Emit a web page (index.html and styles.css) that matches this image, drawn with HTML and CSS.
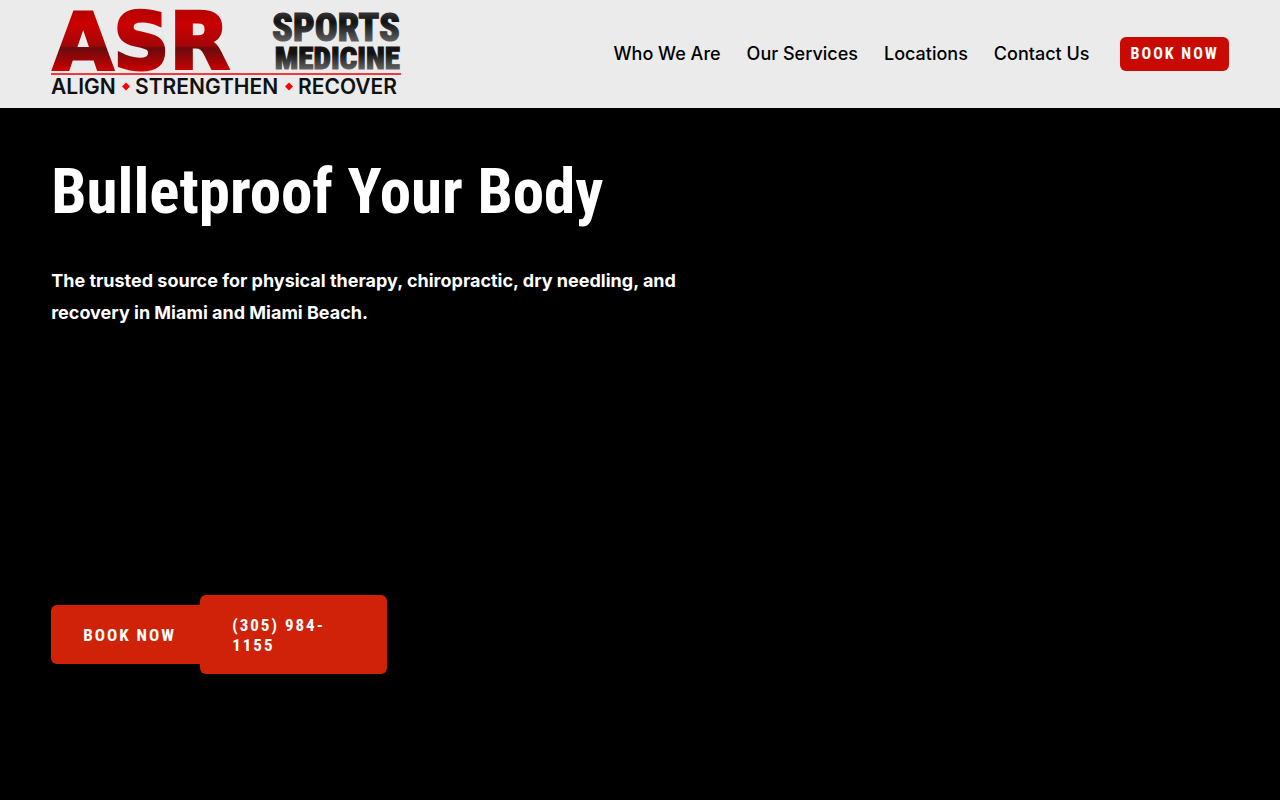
FILE: index.html
```html
<!DOCTYPE html>
<html lang="en">
<head>
<meta charset="utf-8">
<meta name="viewport" content="width=device-width, initial-scale=1">
<title>ASR Sports Medicine</title>
<link rel="stylesheet" href="styles.css">
</head>
<body>
<header class="header">
  <a class="brand" href="#" aria-label="ASR Sports Medicine">
    <svg class="logo" viewBox="0 0 350 84" width="350" height="84">
      <defs>
        <linearGradient id="red" x1="0" y1="0" x2="0" y2="58" gradientUnits="userSpaceOnUse">
          <stop offset="0" stop-color="#b80000"/>
          <stop offset=".2" stop-color="#cb0000"/>
          <stop offset=".58" stop-color="#a60508"/>
          <stop offset=".62" stop-color="#690b0e"/>
          <stop offset="1" stop-color="#c80000"/>
        </linearGradient>
        <linearGradient id="steel-top" x1="0" y1="1" x2="0" y2="31" gradientUnits="userSpaceOnUse">
          <stop offset="0" stop-color="#333"/>
          <stop offset=".3" stop-color="#111"/>
          <stop offset="1" stop-color="#666"/>
        </linearGradient>
        <linearGradient id="steel-bottom" x1="0" y1="34" x2="0" y2="58" gradientUnits="userSpaceOnUse">
          <stop offset="0" stop-color="#151515"/>
          <stop offset=".3" stop-color="#111"/>
          <stop offset="1" stop-color="#666"/>
        </linearGradient>
      </defs>
      <text class="logo-main" x="2" y="57">ASR</text>
      <text class="logo-sports" x="349" y="29">SPORTS</text>
      <text class="logo-medicine" x="349" y="57">MEDICINE</text>
      <rect y="61" width="350" height="2" fill="#f33a3a"/>
      <text class="logo-tag" x="0" y="82">ALIGN</text>
      <path d="M75 70.500l4 4-4 4-4-4z" fill="#f00"/>
      <text class="logo-tag" x="84" y="82">STRENGTHEN</text>
      <path d="M238 70.500l4 4-4 4-4-4z" fill="#f00"/>
      <text class="logo-tag" x="247" y="82">RECOVER</text>
    </svg>
  </a>
  <nav class="nav">
    <a class="nav-link" href="#">Who We Are</a>
    <a class="nav-link" href="#">Our Services</a>
    <a class="nav-link" href="#">Locations</a>
    <a class="nav-link" href="#">Contact Us</a>
    <a class="button button-small" href="#">BOOK NOW</a>
  </nav>
</header>
<main class="hero">
  <h1 class="title">Bulletproof Your Body</h1>
  <p class="lead">The trusted source for physical therapy, chiropractic, dry needling, and recovery in Miami and Miami Beach.</p>
  <div class="actions">
    <a class="button button-large button-book" href="#">BOOK NOW</a>
    <a class="button button-large" href="tel:3059841155">(305) 984-1155</a>
  </div>
</main>
</body>
</html>
```
FILE: styles.css
```css
* { box-sizing: border-box; }
body {
  margin: 0;
  min-height: 100vh;
  display: flex;
  flex-direction: column;
  background: #000;
  color: #fff;
  font-family: Inter, "Open Sans", sans-serif;
}
a { color: inherit; text-decoration: none; }
.header {
  display: flex;
  align-items: center;
  justify-content: space-between;
  padding: 12px 4%;
  background: #ebebeb;
  color: #000;
}
.brand, .logo { display: block; }
.logo { overflow: visible; }
.logo-main {
  font: bold 78px "DejaVu Sans", sans-serif;
  fill: url(#red);
  stroke: url(#red);
  stroke-width: 3;
}
.logo-sports, .logo-medicine {
  font-family: "Roboto Condensed", "Liberation Sans Narrow", sans-serif;
  font-weight: 900;
  text-anchor: end;
  stroke-width: 1;
}
.logo-sports { font-size: 38px; fill: url(#steel-top); stroke: url(#steel-top); }
.logo-medicine { font-size: 31px; fill: url(#steel-bottom); stroke: url(#steel-bottom); }
.logo-tag { font: 600 21px Inter, sans-serif; fill: #111; }
.nav { display: flex; align-items: center; gap: 26px; }
.nav-link { font-size: 18px; font-weight: 500; line-height: 28px; }
.button {
  border-radius: 6px;
  color: #fff;
  font-family: "Roboto Condensed", "Liberation Sans Narrow", sans-serif;
  font-weight: bold;
  letter-spacing: 2px;
  line-height: 20px;
}
.button-small {
  margin-left: 4px;
  padding: 7px 10px 7px 11px;
  background: #c80a00;
  font-size: 16px;
}
.hero {
  flex: 1;
  display: flex;
  flex-direction: column;
  padding: 46px 4% 126px;
}
.title {
  margin: 0;
  font: bold 63px/76px "Roboto Condensed", "Liberation Sans Narrow", sans-serif;
}
.lead {
  max-width: 648px;
  margin: 35px 0 0;
  font-size: 18px;
  font-weight: 700;
  line-height: 32px;
}
.actions {
  display: grid;
  grid-template-columns: 149px 187px;
  align-items: center;
  margin-top: auto;
}
.button-large {
  padding: 20px 32px 19px;
  background: #d02208;
  font-size: 17px;
}
.button-book {
  width: max-content;
  white-space: nowrap;
}
```
